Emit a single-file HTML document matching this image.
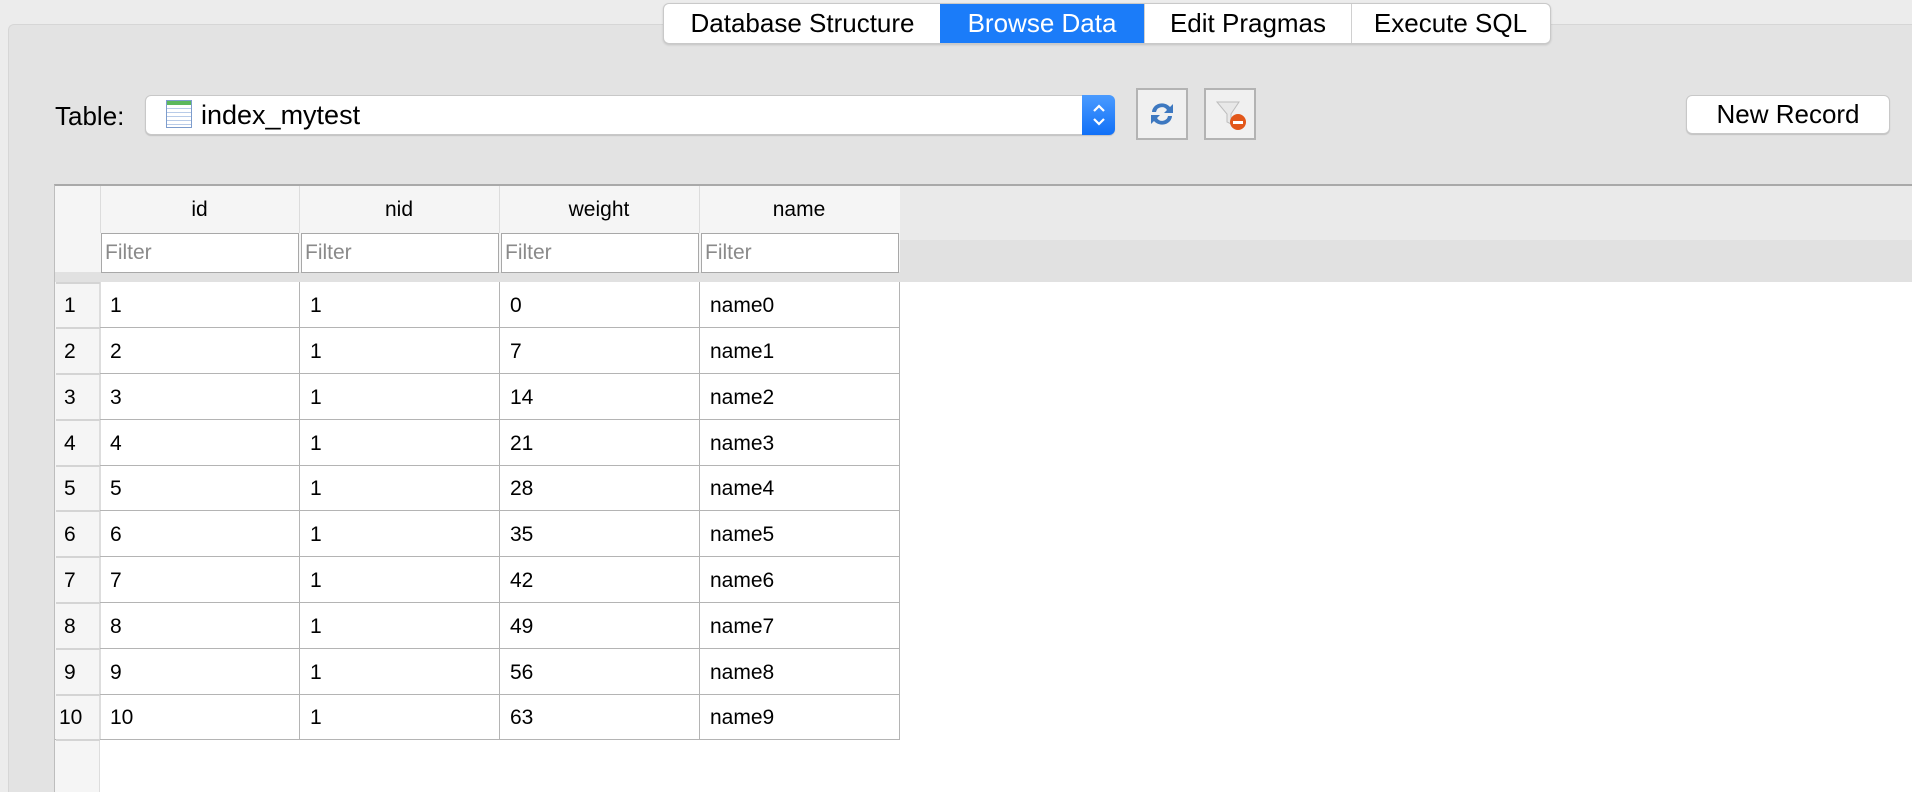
<!DOCTYPE html>
<html><head><meta charset="utf-8"><style>
*{margin:0;padding:0;box-sizing:border-box}
body{width:1912px;height:792px;overflow:hidden;background:#ececec;font-family:"Liberation Sans",sans-serif;position:relative;color:#000}
.a{position:absolute}
.tab{position:absolute;top:4px;height:39px;font-size:26px;line-height:39px;text-align:center;background:#fff}
.cell{position:absolute;font-size:21px;line-height:47px;padding-left:10px}
.hl{position:absolute;height:1px;background:#b4b4b4}
.vl{position:absolute;width:1px;background:#b4b4b4}
.hd{position:absolute;top:190px;text-align:center;font-size:21px;line-height:40px}
.f{position:absolute;top:233px;width:198px;height:40px;background:#fff;border:1px solid #a8a8a8;color:#8a8a8a;font-size:21px;line-height:38px;padding-left:3px}
.rh{position:absolute;left:56px;width:44px;height:2px;background:#d4d4d4}
</style></head><body>
<div class="a" style="left:8px;top:24px;right:0;bottom:0;background:#e3e3e3;border-top:1px solid #d6d6d6;border-left:1px solid #d6d6d6;border-radius:6px 0 0 0"></div>
<div class="a" style="left:663px;top:3px;width:888px;height:41px;border:1px solid #c9c9c9;border-radius:6px;background:#fff;box-shadow:0 1px 2px rgba(0,0,0,.15)"></div>
<div class="tab" style="left:665px;width:275px;border-radius:5px 0 0 5px">Database Structure</div>
<div class="tab" style="left:940px;width:204px;background:#1b7cf9;color:#fff">Browse Data</div>
<div class="tab" style="left:1144px;width:207px;border-left:1px solid #d0d0d0">Edit Pragmas</div>
<div class="tab" style="left:1351px;width:198px;border-left:1px solid #d0d0d0;border-radius:0 5px 5px 0">Execute SQL</div>
<div class="a" style="left:55px;top:100px;font-size:26px;line-height:32px">Table:</div>
<div class="a" style="left:145px;top:95px;width:970px;height:40px;background:#fff;border:1px solid #c8c8c8;border-radius:6px;box-shadow:0 1px 1px rgba(0,0,0,.15)"></div>
<div class="a" style="left:166px;top:100px;width:26px;height:28px;border:1px solid #7d9ccc;background:repeating-linear-gradient(#fff 0 3px,#b8cbe8 3px 4px);"><div style="height:4px;background:#5cb85c"></div></div>
<div class="a" style="left:201px;top:100px;font-size:27px;line-height:30px">index_mytest</div>
<div class="a" style="left:1082px;top:95px;width:33px;height:40px;background:linear-gradient(#4a9bff,#1170f7);border-radius:0 6px 6px 0"></div>
<svg class="a" style="left:1090px;top:101px" width="18" height="28"><path d="M4 10l5-5 5 5M4 18l5 5 5-5" stroke="#fff" stroke-width="2.2" fill="none"/></svg>
<div class="a" style="left:1136px;top:88px;width:52px;height:52px;border:2px solid #b3b3b3;background:#f0f0f0"></div>
<svg class="a" style="left:1146px;top:98px" width="32" height="32"><path d="M6 14a10 9 0 0 1 18-5l3-3v9h-9l3-3a6 6 0 0 0-11 2z" fill="#3d78c0"/><path d="M26 18a10 9 0 0 1-18 5l-3 3v-9h9l-3 3a6 6 0 0 0 11-2z" fill="#3d78c0"/></svg>
<div class="a" style="left:1204px;top:88px;width:52px;height:52px;border:2px solid #b3b3b3;background:#f0f0f0"></div>
<svg class="a" style="left:1214px;top:98px" width="34" height="34"><path d="M3 4h22l-8 12v10l-4-2v-8z" fill="#e8e8e8" stroke="#bdbdbd"/><circle cx="24" cy="24" r="8" fill="#e2571a"/><rect x="19" y="23" width="10" height="3" fill="#fff"/></svg>
<div class="a" style="left:1686px;top:95px;width:204px;height:39px;background:#fff;border:1px solid #c8c8c8;border-radius:6px;box-shadow:0 1px 1px rgba(0,0,0,.15);font-size:26px;line-height:37px;text-align:center">New Record</div>
<div class="a" style="left:54px;top:184px;right:0;bottom:0;border-top:2px solid #a9a9a9;border-left:1px solid #bdbdbd;background:#fff"></div>
<div class="a" style="left:55px;top:186px;right:0;height:54px;background:#eaeaea"></div>
<div class="a" style="left:55px;top:240px;right:0;height:42px;background:#e1e1e1"></div>
<div class="a" style="left:55px;top:186px;width:845px;height:87px;background:#f5f5f5"></div>
<div class="a" style="left:55px;top:272px;width:845px;height:10px;background:#e1e1e1"></div>
<div class="a" style="left:55px;top:282px;width:45px;bottom:0;background:#f5f5f5;border-right:1px solid #ddd"></div>
<div class="a" style="left:100px;top:186px;width:1px;height:47px;background:#dcdcdc"></div>
<div class="a" style="left:299px;top:186px;width:1px;height:47px;background:#dcdcdc"></div>
<div class="a" style="left:499px;top:186px;width:1px;height:47px;background:#dcdcdc"></div>
<div class="a" style="left:699px;top:186px;width:1px;height:47px;background:#dcdcdc"></div>
<div class="hd" style="left:100px;width:199px">id</div>
<div class="hd" style="left:299px;width:200px">nid</div>
<div class="hd" style="left:499px;width:200px">weight</div>
<div class="hd" style="left:699px;width:200px">name</div>
<div class="f" style="left:101px">Filter</div>
<div class="f" style="left:301px">Filter</div>
<div class="f" style="left:501px">Filter</div>
<div class="f" style="left:701px">Filter</div>
<div class="vl" style="left:299px;top:282px;height:458px"></div>
<div class="vl" style="left:499px;top:282px;height:458px"></div>
<div class="vl" style="left:699px;top:282px;height:458px"></div>
<div class="vl" style="left:899px;top:282px;height:458px"></div>
<div class="vl" style="left:100px;top:282px;height:458px;background:#ddd"></div>
<div class="hl" style="left:100px;top:327px;width:800px"></div>
<div class="hl" style="left:100px;top:373px;width:800px"></div>
<div class="hl" style="left:100px;top:419px;width:800px"></div>
<div class="hl" style="left:100px;top:465px;width:800px"></div>
<div class="hl" style="left:100px;top:510px;width:800px"></div>
<div class="hl" style="left:100px;top:556px;width:800px"></div>
<div class="hl" style="left:100px;top:602px;width:800px"></div>
<div class="hl" style="left:100px;top:648px;width:800px"></div>
<div class="hl" style="left:100px;top:694px;width:800px"></div>
<div class="hl" style="left:55px;top:739px;width:845px"></div>
<div class="rh" style="top:282px"></div><div class="rh" style="top:327px"></div><div class="rh" style="top:373px"></div><div class="rh" style="top:419px"></div><div class="rh" style="top:465px"></div><div class="rh" style="top:510px"></div><div class="rh" style="top:556px"></div><div class="rh" style="top:602px"></div><div class="rh" style="top:648px"></div><div class="rh" style="top:694px"></div><div class="rh" style="top:739px"></div>

<div class="cell" style="left:54px;top:282px;padding-left:10px">1</div><div class="cell" style="left:100px;top:282px">1</div><div class="cell" style="left:300px;top:282px">1</div><div class="cell" style="left:500px;top:282px">0</div><div class="cell" style="left:700px;top:282px">name0</div>
<div class="cell" style="left:54px;top:328px;padding-left:10px">2</div><div class="cell" style="left:100px;top:328px">2</div><div class="cell" style="left:300px;top:328px">1</div><div class="cell" style="left:500px;top:328px">7</div><div class="cell" style="left:700px;top:328px">name1</div>
<div class="cell" style="left:54px;top:374px;padding-left:10px">3</div><div class="cell" style="left:100px;top:374px">3</div><div class="cell" style="left:300px;top:374px">1</div><div class="cell" style="left:500px;top:374px">14</div><div class="cell" style="left:700px;top:374px">name2</div>
<div class="cell" style="left:54px;top:420px;padding-left:10px">4</div><div class="cell" style="left:100px;top:420px">4</div><div class="cell" style="left:300px;top:420px">1</div><div class="cell" style="left:500px;top:420px">21</div><div class="cell" style="left:700px;top:420px">name3</div>
<div class="cell" style="left:54px;top:465px;padding-left:10px">5</div><div class="cell" style="left:100px;top:465px">5</div><div class="cell" style="left:300px;top:465px">1</div><div class="cell" style="left:500px;top:465px">28</div><div class="cell" style="left:700px;top:465px">name4</div>
<div class="cell" style="left:54px;top:511px;padding-left:10px">6</div><div class="cell" style="left:100px;top:511px">6</div><div class="cell" style="left:300px;top:511px">1</div><div class="cell" style="left:500px;top:511px">35</div><div class="cell" style="left:700px;top:511px">name5</div>
<div class="cell" style="left:54px;top:557px;padding-left:10px">7</div><div class="cell" style="left:100px;top:557px">7</div><div class="cell" style="left:300px;top:557px">1</div><div class="cell" style="left:500px;top:557px">42</div><div class="cell" style="left:700px;top:557px">name6</div>
<div class="cell" style="left:54px;top:603px;padding-left:10px">8</div><div class="cell" style="left:100px;top:603px">8</div><div class="cell" style="left:300px;top:603px">1</div><div class="cell" style="left:500px;top:603px">49</div><div class="cell" style="left:700px;top:603px">name7</div>
<div class="cell" style="left:54px;top:649px;padding-left:10px">9</div><div class="cell" style="left:100px;top:649px">9</div><div class="cell" style="left:300px;top:649px">1</div><div class="cell" style="left:500px;top:649px">56</div><div class="cell" style="left:700px;top:649px">name8</div>
<div class="cell" style="left:54px;top:694px;padding-left:5px">10</div><div class="cell" style="left:100px;top:694px">10</div><div class="cell" style="left:300px;top:694px">1</div><div class="cell" style="left:500px;top:694px">63</div><div class="cell" style="left:700px;top:694px">name9</div>
</body></html>
